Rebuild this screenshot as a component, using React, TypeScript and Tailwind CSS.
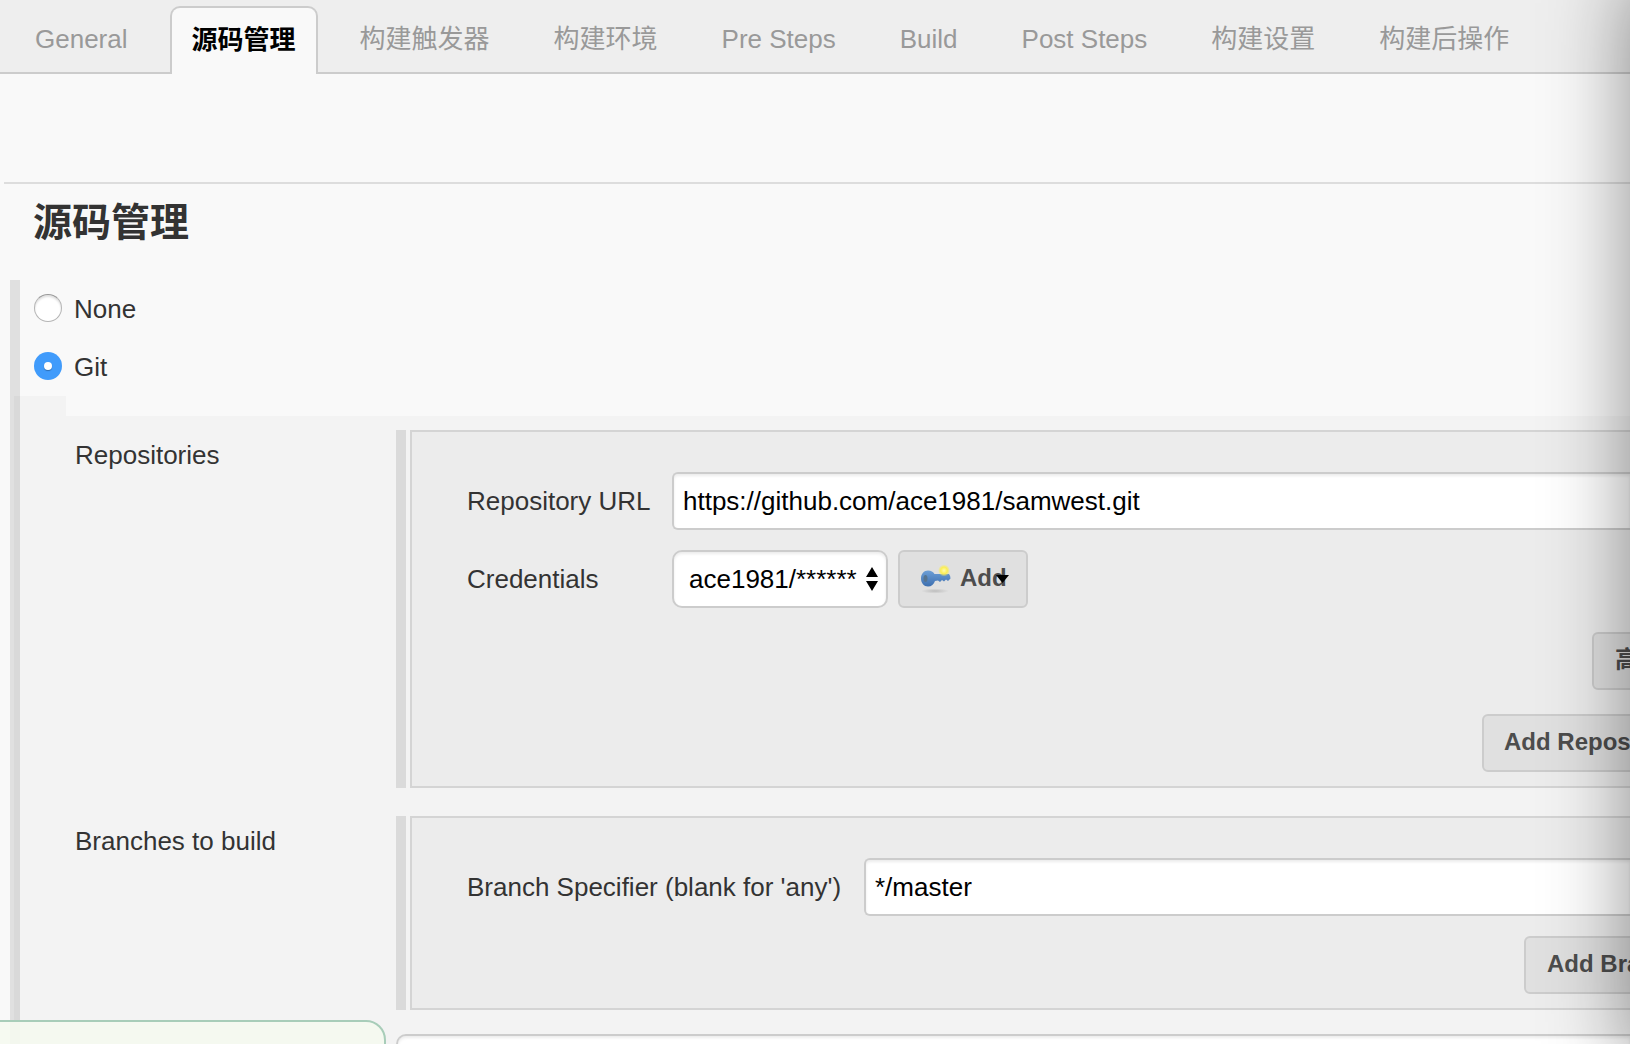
import React from "react";

const tabs = ["General", "源码管理", "构建触发器", "构建环境", "Pre Steps", "Build", "Post Steps", "构建设置", "构建后操作"];

function TabBar() {
  return (
    <nav className="flex h-[74px] shrink-0 items-end gap-5 border-b-2 border-[#ccc] bg-[#eee] pl-[13px]">
      {tabs.map((t) =>
        t === "源码管理" ? (
          <span key={t} className="-mb-[2px] h-[68px] rounded-t-[10px] border-2 border-b-0 border-[#ccc] bg-[#f9f9f9] px-5 pt-[12px] font-bold leading-[40px] text-black">
            {t}
          </span>
        ) : (
          <span key={t} className="h-[66px] px-[22px] pt-[13px] leading-[40px] text-[#999]">
            {t}
          </span>
        ),
      )}
    </nav>
  );
}

function Radio({ label, checked }: { label: string; checked?: boolean }) {
  return (
    <label className="flex h-[58px] items-center gap-3 pl-[14px]">
      {checked ? (
        <span className="-mt-[2px] flex size-7 items-center justify-center rounded-full bg-[#409bfb]">
          <span className="size-2 rounded-full bg-white shadow-[0_1px_1px_rgba(0,0,0,0.3)]" />
        </span>
      ) : (
        <span className="-mt-[2px] size-7 rounded-full border border-[#b5b5b5] border-t-[#999] bg-white shadow-[inset_0_2px_2px_rgba(0,0,0,0.12)]" />
      )}
      <span className="leading-[30px]">{label}</span>
    </label>
  );
}

function KeyIcon() {
  return (
    <svg width="32" height="32" viewBox="0 0 32 32" className="mt-[3px] shrink-0">
      <defs>
        <linearGradient id="key" x1="0" y1="0" x2="0" y2="1">
          <stop offset="0" stopColor="#6d9fd6" />
          <stop offset="1" stopColor="#3d6fb0" />
        </linearGradient>
        <radialGradient id="spark">
          <stop offset="0" stopColor="#fffbb0" />
          <stop offset="0.55" stopColor="#fbee55" />
          <stop offset="1" stopColor="#fbee55" stopOpacity="0" />
        </radialGradient>
        <radialGradient id="shade">
          <stop offset="0" stopColor="#999" stopOpacity="0.5" />
          <stop offset="1" stopColor="#999" stopOpacity="0" />
        </radialGradient>
      </defs>
      <ellipse cx="15" cy="27" rx="14" ry="2.6" fill="url(#shade)" />
      <path d="M8 6.500c3 0 5.300 1.400 6.500 3.500H29q1.500 1.500 1.500 4.500l-2.500 2.500-2-1.500-2 2-2-1.500-2 2-2-1.500-3 .500C13.800 20.500 11.500 22.500 8 22.500 4 22.500 1 19 1 14.500S4 6.500 8 6.500Z" fill="url(#key)" />
      <ellipse cx="5.500" cy="14.500" rx="2" ry="3.500" fill="#56748f" />
      <circle cx="24" cy="6.500" r="6" fill="url(#spark)" />
    </svg>
  );
}

function Button({ children, className = "" }: { children: React.ReactNode; className?: string }) {
  return (
    <button className={`h-[58px] shrink-0 rounded-[6px] border-2 border-[#ccc] bg-[#e0e0e0] pb-[2px] text-left text-[24px] font-bold leading-[48px] whitespace-nowrap text-[#4d4d4d] ${className}`}>
      {children}
    </button>
  );
}

function TextInput({ value, className = "" }: { value: string; className?: string }) {
  return (
    <input
      readOnly
      value={value}
      className={`h-[58px] rounded-l-[6px] border-2 border-r-0 border-[#ccc] bg-white pl-[9px] leading-[30px] text-black shadow-[inset_0_2px_3px_rgba(0,0,0,0.08)] outline-none ${className}`}
    />
  );
}

function Chunk({ label, className = "", children }: { label: string; className?: string; children: React.ReactNode }) {
  return (
    <section className={`flex pl-[55px] ${className}`}>
      <div className="w-[321px] shrink-0 pt-[10px] leading-[30px]">{label}</div>
      <div className="mr-1 w-[10px] shrink-0 bg-[#dadada]" />
      <div className="min-w-0 flex-1 overflow-hidden border-2 border-r-0 border-[#d4d4d4] bg-[#ececec] pt-10">{children}</div>
    </section>
  );
}

export default function App() {
  return (
    <div className="relative flex h-[1044px] w-[1630px] flex-col overflow-hidden bg-[#f9f9f9] font-['Liberation_Sans','Noto_Sans_CJK_SC',sans-serif] text-[26px] text-[#333]">
      <TabBar />
      <div className="ml-1 mt-[108px] h-[2px] shrink-0 bg-[#ddd]" />
      <h1 className="h-[96px] shrink-0 pl-[33px] pt-[9px] text-[39px] font-bold leading-[60px]">源码管理</h1>

      <main className="ml-[10px] flex min-h-0 flex-1">
        <div className="flex w-[10px] shrink-0 flex-col bg-[#e0e0e0]">
          <div className="ml-1 mt-[116px] flex-1 bg-[#d9d9d9]" />
        </div>
        <div className="flex min-w-0 flex-1 flex-col">
          <Radio label="None" />
          <Radio label="Git" checked />
          <div className="h-5 w-[46px] shrink-0 bg-[#f3f3f3]" />
          <div className="min-h-0 flex-1 overflow-hidden bg-[#f3f3f3] pt-[14px]">
            <Chunk label="Repositories" className="h-[358px]">
              <div className="flex items-center pl-[55px]">
                <span className="w-[205px] shrink-0">Repository URL</span>
                <TextInput value="https://github.com/ace1981/samwest.git" className="min-w-0 flex-1" />
              </div>
              <div className="mt-5 flex items-center pl-[55px]">
                <span className="w-[205px] shrink-0">Credentials</span>
                <div className="flex h-[58px] w-[216px] items-center justify-between rounded-[10px] border-2 border-[#ccc] bg-white pl-[15px] pr-2 text-black shadow-[inset_0_2px_3px_rgba(0,0,0,0.08)]">
                  <span>ace1981/******</span>
                  <svg width="12" height="24" viewBox="0 0 12 24">
                    <path d="M6 0 12 10H0ZM0 14h12L6 24Z" />
                  </svg>
                </div>
                <Button className="relative ml-[10px] flex w-[130px] items-center gap-2 pl-[20px]">
                  <KeyIcon />
                  <span className="leading-[48px]">Add</span>
                  <svg width="13" height="8" viewBox="0 0 13 8" className="absolute left-[96px] top-[23px]">
                    <path d="M0 0h13L6.500 8Z" fill="#000" />
                  </svg>
                </Button>
              </div>
              <div className="mt-6 flex pl-[1180px]">
                <Button className="w-[100px] pl-[21px]">高级...</Button>
              </div>
              <div className="mt-6 flex pl-[1070px]">
                <Button className="w-[210px] pl-[20px]">Add Repository</Button>
              </div>
            </Chunk>
            <Chunk label="Branches to build" className="mt-7 h-[194px]">
              <div className="flex items-center pl-[55px]">
                <span className="w-[397px] shrink-0">Branch Specifier (blank for 'any')</span>
                <TextInput value="*/master" className="min-w-0 flex-1" />
              </div>
              <div className="mt-5 flex pl-[1112px]">
                <Button className="w-[180px] pl-[21px]">Add Branch</Button>
              </div>
            </Chunk>
            <div className="ml-[376px] mt-6 h-[58px] rounded-tl-[10px] border-2 border-r-0 border-[#ccc] bg-white shadow-[inset_0_2px_3px_rgba(0,0,0,0.08)]" />
          </div>
        </div>
      </main>

      <div className="absolute -bottom-10 -left-10 h-16 w-[426px] rounded-[20px] border-2 border-[#a8cdb9] bg-[#f5f9f0]/90" />
      <div className="pointer-events-none absolute -bottom-6 -top-6 left-full w-[400px] shadow-[0_0_78px_rgba(0,0,0,0.43)]" />
    </div>
  );
}
